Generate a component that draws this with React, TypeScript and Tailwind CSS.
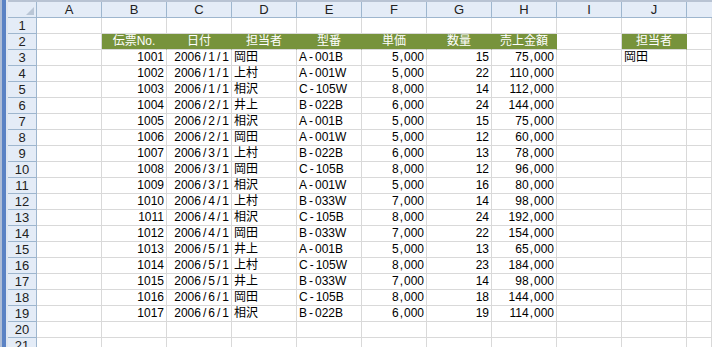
import React from "react";

const cols = ["A", "B", "C", "D", "E", "F", "G", "H", "I", "J"];

type Row = [string, string, string, string, string, string, string];
const data: Row[] = [
  ["1001", "2006/1/1", "岡田", "A-001B", "5,000", "15", "75,000"],
  ["1002", "2006/1/1", "上村", "A-001W", "5,000", "22", "110,000"],
  ["1003", "2006/1/1", "相沢", "C-105W", "8,000", "14", "112,000"],
  ["1004", "2006/2/1", "井上", "B-022B", "6,000", "24", "144,000"],
  ["1005", "2006/2/1", "相沢", "A-001B", "5,000", "15", "75,000"],
  ["1006", "2006/2/1", "岡田", "A-001W", "5,000", "12", "60,000"],
  ["1007", "2006/3/1", "上村", "B-022B", "6,000", "13", "78,000"],
  ["1008", "2006/3/1", "岡田", "C-105B", "8,000", "12", "96,000"],
  ["1009", "2006/3/1", "相沢", "A-001W", "5,000", "16", "80,000"],
  ["1010", "2006/4/1", "上村", "B-033W", "7,000", "14", "98,000"],
  ["1011", "2006/4/1", "相沢", "C-105B", "8,000", "24", "192,000"],
  ["1012", "2006/4/1", "岡田", "B-033W", "7,000", "22", "154,000"],
  ["1013", "2006/5/1", "井上", "A-001B", "5,000", "13", "65,000"],
  ["1014", "2006/5/1", "上村", "C-105W", "8,000", "23", "184,000"],
  ["1015", "2006/5/1", "井上", "B-033W", "7,000", "14", "98,000"],
  ["1016", "2006/6/1", "岡田", "C-105B", "8,000", "18", "144,000"],
  ["1017", "2006/6/1", "相沢", "B-022B", "6,000", "19", "114,000"],
];

const headers = ["伝票No.", "日付", "担当者", "型番", "単価", "数量", "売上金額"];
const align = ["r", "r", "l", "l", "r", "r", "r"];

function fmt(v: string) {
  const parts: React.ReactNode[] = [];
  let buf = "";
  let k = 0;
  for (const ch of v) {
    if (ch === "/" || ch === "," || ch === "-") {
      if (buf) parts.push(buf);
      buf = "";
      const cls =
        ch === "/" ? "mx-[2px]" : ch === "," ? "mx-[1px]" : "mx-[2px]";
      parts.push(
        <span key={k++} className={cls}>
          {ch}
        </span>
      );
    } else {
      buf += ch;
    }
  }
  if (buf) parts.push(buf);
  return parts;
}

function Cell({
  children,
  a = "l",
  green = false,
  last = false,
}: {
  children?: React.ReactNode;
  a?: string;
  green?: boolean;
  last?: boolean;
}) {
  const base = last ? "flex-1 min-w-0" : "w-[65px] shrink-0";
  if (green) {
    return (
      <div
        className={`${base} h-full flex items-center justify-center bg-[#77933c] border-r border-b border-r-[#77933c] border-b-[#d9d9d9] text-white whitespace-nowrap`}
      >
        {children}
      </div>
    );
  }
  return (
    <div
      className={`${base} h-full flex items-center px-[2px] border-r border-b border-[#d9d9d9] whitespace-nowrap text-black ${
        a === "r" ? "justify-end" : a === "c" ? "justify-center" : "justify-start"
      }`}
    >
      {children}
    </div>
  );
}

function RowHeader({ n }: { n: number }) {
  return (
    <div className="w-[29px] shrink-0 h-full flex items-center justify-center bg-[#e4ecf7] border-r border-b border-[#9eb6ce] text-[#222] text-[13px]">
      {n}
    </div>
  );
}

export default function App() {
  const rows: React.ReactNode[] = [];
  for (let r = 1; r <= 21; r++) {
    let cells: React.ReactNode[] = [];
    if (r === 2) {
      cells = [
        <Cell key="A" />,
        ...headers.map((h, i) => (
          <Cell key={i} green>
            {h}
          </Cell>
        )),
        <Cell key="I" />,
        <Cell key="J" green>
          担当者
        </Cell>,
        <Cell key="K" last />,
      ];
    } else if (r >= 3 && r <= 19) {
      const d = data[r - 3];
      cells = [
        <Cell key="A" />,
        ...d.map((v, i) => (
          <Cell key={i} a={align[i]}>
            {fmt(v)}
          </Cell>
        )),
        <Cell key="I" />,
        <Cell key="J">{r === 3 ? "岡田" : null}</Cell>,
        <Cell key="K" last />,
      ];
    } else {
      cells = [
        ...cols.map((c) => <Cell key={c} />),
        <Cell key="K" last />,
      ];
    }
    rows.push(
      <div key={r} className="flex h-[16px] shrink-0">
        <RowHeader n={r} />
        {cells}
      </div>
    );
  }

  return (
    <div
      className="flex w-[712px] h-[347px] overflow-hidden bg-white text-[12px] leading-[15px]"
      style={{ fontFamily: '"Liberation Sans", "Noto Sans CJK JP", sans-serif' }}
    >
      <div className="flex shrink-0 h-full">
        <div className="w-[2px] bg-[#aebdd6]" />
        <div className="w-[4px] bg-[#5a82c4]" />
        <div className="w-[2px] bg-[#dfe6f0]" />
      </div>
      <div className="flex-1 flex flex-col min-w-0">
        <div className="h-[2px] shrink-0 bg-[#b8c3d3]" />
        <div className="flex h-[16px] shrink-0">
          <div className="relative w-[29px] shrink-0 h-full bg-[#e4ecf7] border-r border-b border-[#9eb6ce]">
            <svg
              className="absolute right-[2px] bottom-[2px]"
              width="8"
              height="8"
              viewBox="0 0 8 8"
            >
              <polygon points="8,0 8,8 0,8" fill="#b9c6d6" />
            </svg>
          </div>
          {cols.map((c) => (
            <div
              key={c}
              className="w-[65px] shrink-0 h-full flex items-center justify-center bg-[#e4ecf7] border-r border-b border-[#9eb6ce] text-[#222] text-[13px]"
            >
              {c}
            </div>
          ))}
          <div className="flex-1 h-full bg-[#e4ecf7] border-b border-[#9eb6ce]" />
        </div>
        {rows}
      </div>
    </div>
  );
}
